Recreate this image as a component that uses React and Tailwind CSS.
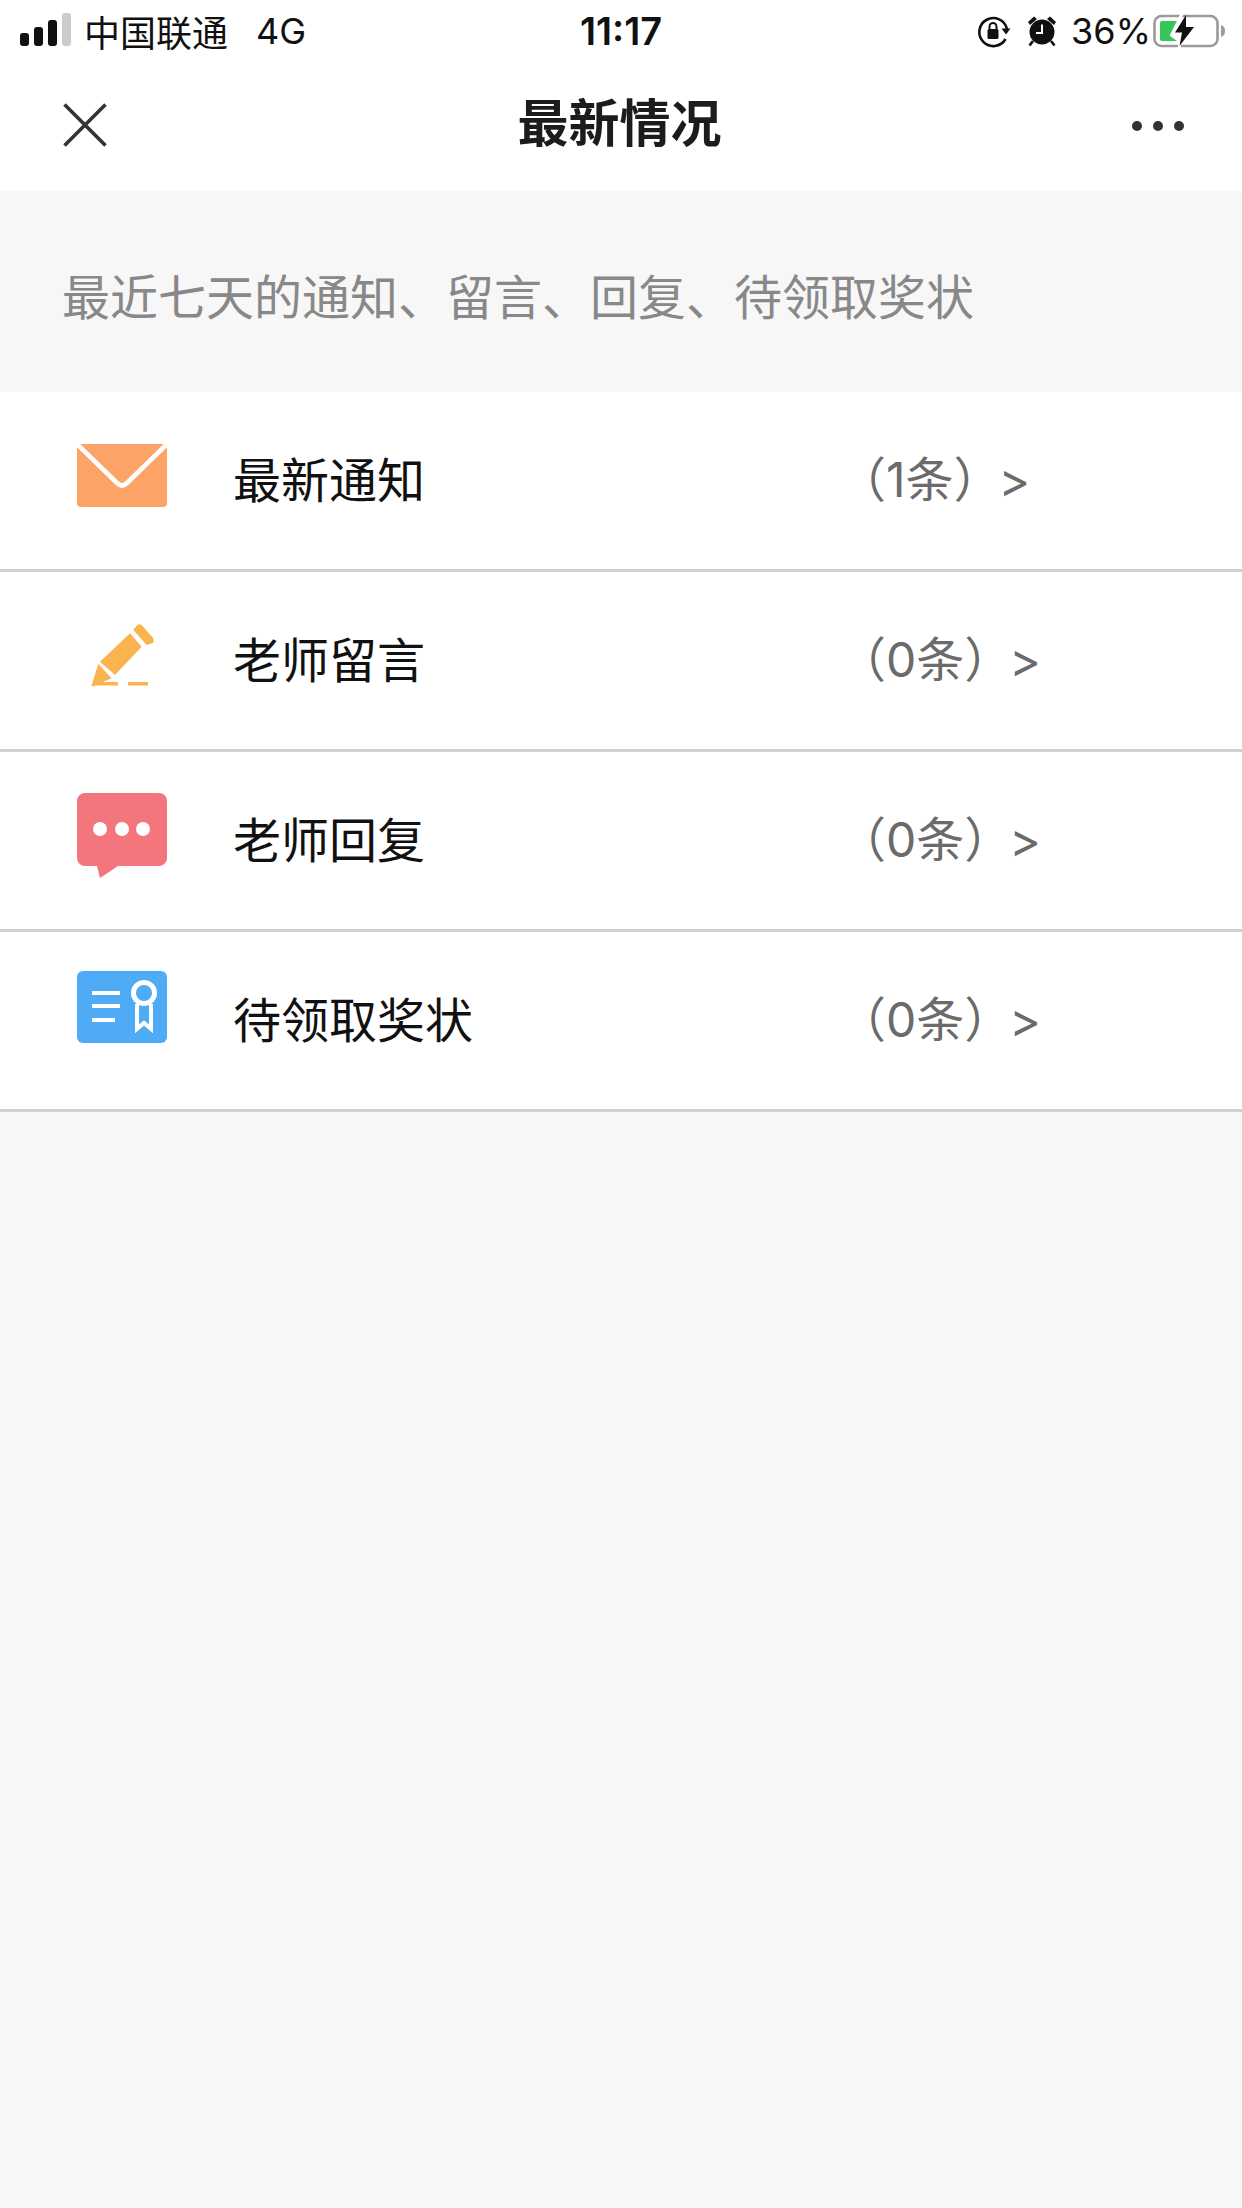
const font = { fontFamily: '"Noto Sans CJK SC", "Noto Sans", sans-serif' };
const latin = { fontFamily: 'Inter, "Noto Sans CJK SC", sans-serif' };

function Signal() {
  return (
    <svg width="52" height="34" viewBox="0 0 52 34" className="block">
      <rect x="0" y="20" width="9" height="13" rx="3" fill="#111" />
      <rect x="14" y="14" width="9" height="19" rx="3" fill="#111" />
      <rect x="28" y="7" width="9" height="26" rx="3" fill="#111" />
      <rect x="42" y="0" width="9" height="33" rx="3" fill="#ccc" />
    </svg>
  );
}

function RotationLock() {
  return (
    <svg width="34" height="34" viewBox="0 0 34 34" className="block">
      <path d="M30 15 A14 14 0 1 0 28.5 25" fill="none" stroke="#111" strokeWidth="2.6" />
      <path d="M24.5 14.5 L33.5 14.5 L29 20.5 Z" fill="#111" />
      <rect x="10.5" y="15" width="11" height="10" rx="1.5" fill="#111" />
      <path d="M12.5 15.5 V12.5 a3.5 3.5 0 0 1 7 0 V15.5" fill="none" stroke="#111" strokeWidth="2" />
    </svg>
  );
}

function Alarm() {
  return (
    <svg width="30" height="32" viewBox="0 0 30 32" className="block">
      <circle cx="15" cy="17" r="12.5" fill="#111" />
      <path d="M1 7 L7 1.5 L10 4 L3 10 Z" fill="#111" />
      <path d="M29 7 L23 1.5 L20 4 L27 10 Z" fill="#111" />
      <path d="M6 26 L2.5 30.5 M24 26 L27.5 30.5" stroke="#111" strokeWidth="2.6" />
      <path d="M15 9.5 V18 H9" fill="none" stroke="#fff" strokeWidth="2" />
    </svg>
  );
}

function Battery() {
  return (
    <svg width="74" height="36" viewBox="0 0 74 36" className="block">
      <rect x="1.5" y="3" width="63" height="30" rx="7" fill="none" stroke="#9a9a9a" strokeWidth="2.6" />
      <path d="M68 12 c3 1 4 3 4 6 s-1 5 -4 6 Z" fill="#9a9a9a" />
      <path d="M7 10 a2 2 0 0 1 2 -2 H24 L24 14 L17 23 L24 28 H9 a2 2 0 0 1 -2 -2 Z" fill="#33c659" />
      <path d="M30 -1 L19 21 L28 21 L26 37" fill="none" stroke="#fff" strokeWidth="3" />
      <path d="M33 2 L22 19.5 H29 L26.5 33 L41 14 H33 Z" fill="#111" />
    </svg>
  );
}

function MailIcon() {
  return (
    <svg width="90" height="64" viewBox="0 0 90 64" className="block">
      <rect x="0" y="0" width="90" height="63" rx="4" fill="#fca368" />
      <path d="M1 1 L40 39 Q45 44 50 39 L89 1" fill="none" stroke="#fff" strokeWidth="4.6" />
    </svg>
  );
}

function PencilIcon() {
  return (
    <svg width="90" height="64" viewBox="0 0 90 64" className="block">
      <path d="M53 10.3 L64.7 23.7 L38 52 L23 38.7 Z" fill="#fbb350" />
      <path d="M21.3 41 L34.7 55.3 L15 63.5 Q14 63 14.7 62 Z" fill="#fbb350" />
      <path d="M56.3 7 L60.3 2 Q62.5 0.5 64.7 2 L76.3 15.3 Q77 18 76.3 19.7 L69.7 22 Z" fill="#fbb350" />
      <rect x="16" y="59" width="25" height="3.5" fill="#fbb350" />
      <rect x="51" y="59" width="20" height="3.5" fill="#fbb350" />
    </svg>
  );
}

function ChatIcon() {
  return (
    <svg width="90" height="86" viewBox="0 0 90 86" className="block">
      <path d="M8 0 H82 a8 8 0 0 1 8 8 V65 a8 8 0 0 1 -8 8 H41 L23 85 L20 73 H8 a8 8 0 0 1 -8 -8 V8 a8 8 0 0 1 8 -8 Z" fill="#f2767c" />
      <circle cx="23" cy="36" r="7" fill="#fff" />
      <circle cx="45" cy="36" r="7" fill="#fff" />
      <circle cx="66" cy="36" r="7" fill="#fff" />
    </svg>
  );
}

function CertIcon() {
  return (
    <svg width="90" height="72" viewBox="0 0 90 72" className="block">
      <rect x="0" y="0" width="90" height="72" rx="6" fill="#4fabf5" />
      <rect x="15" y="20" width="28" height="4" fill="#fff" />
      <rect x="15" y="33" width="28" height="4" fill="#fff" />
      <rect x="15" y="47" width="23" height="4" fill="#fff" />
      <circle cx="67" cy="22" r="10.5" fill="none" stroke="#fff" strokeWidth="5" />
      <path d="M60 33 V58 L67 52 L74 58 V33" fill="none" stroke="#fff" strokeWidth="4" />
    </svg>
  );
}

const rows = [
  { icon: <MailIcon />, mt: "mt-[52px]", label: "最新通知", count: "（1条）" },
  { icon: <PencilIcon />, mt: "mt-[51px]", label: "老师留言", count: "（0条）" },
  { icon: <ChatIcon />, mt: "mt-[41px]", label: "老师回复", count: "（0条）" },
  { icon: <CertIcon />, mt: "mt-[39px]", label: "待领取奖状", count: "（0条）" },
];

export default function App() {
  return (
    <div className="w-[1242px] h-[2208px] bg-[#f7f7f7] flex flex-col overflow-hidden" style={font}>
      <div className="bg-white h-[62px] flex items-center relative text-[#111]">
        <div className="ml-[20px] mb-[2px]"><Signal /></div>
        <span className="ml-[12px] text-[36px] leading-[44px] font-normal">中国联通</span>
        <span className="ml-[28px] text-[36px] leading-[44px] font-normal" style={latin}>4G</span>
        <span className="absolute left-0 right-0 text-center text-[38px] leading-[44px] font-semibold" style={latin}>11:17</span>
        <div className="ml-auto flex items-center mr-[15px]">
          <RotationLock />
          <div className="ml-[16px]"><Alarm /></div>
          <span className="ml-[14px] text-[36px] leading-[44px] font-normal mr-[2px]" style={latin}>36%</span>
          <Battery />
        </div>
      </div>

      <div className="bg-white h-[129px] flex items-center justify-between pl-[63px] pr-[58px] relative">
        <svg width="44" height="44" viewBox="0 0 44 44" className="block mb-[3px]">
          <path d="M1.5 1.5 L42.5 42.5 M42.5 1.5 L1.5 42.5" stroke="#333" strokeWidth="3.6" />
        </svg>
        <span className="absolute left-0 right-[3px] top-[26px] text-center text-[51px] leading-[64px] font-bold text-[#1c1c1c]">最新情况</span>
        <div className="flex gap-[11px] mb-[2px]">
          <span className="w-[10px] h-[10px] rounded-full bg-[#333]" />
          <span className="w-[10px] h-[10px] rounded-full bg-[#333]" />
          <span className="w-[10px] h-[10px] rounded-full bg-[#333]" />
        </div>
      </div>

      <div className="h-[201px] flex items-center pl-[62px] pt-[5px] text-[48px] text-[#888] font-normal leading-[60px]">
        最近七天的通知、留言、回复、待领取奖状
      </div>

      <div className="flex flex-col">
        {rows.map((r) => (
          <div key={r.label} className="h-[180px] bg-white border-b-[3px] border-[#cfcfcf] flex items-start relative">
            <div className={"w-[90px] ml-[77px] " + r.mt}>{r.icon}</div>
            <span className="absolute left-[233px] top-[53px] text-[48px] leading-[64px] font-normal text-[#111]">{r.label}</span>
            <div className="absolute left-[838px] top-[56px] flex items-baseline text-[#6b6b6b]" style={latin}>
              <span className="text-[48px] leading-[64px] font-normal">{r.count}</span>
              <span className="ml-[-3px] text-[48px] leading-[64px] font-normal">&gt;</span>
            </div>
          </div>
        ))}
      </div>
    </div>
  );
}
